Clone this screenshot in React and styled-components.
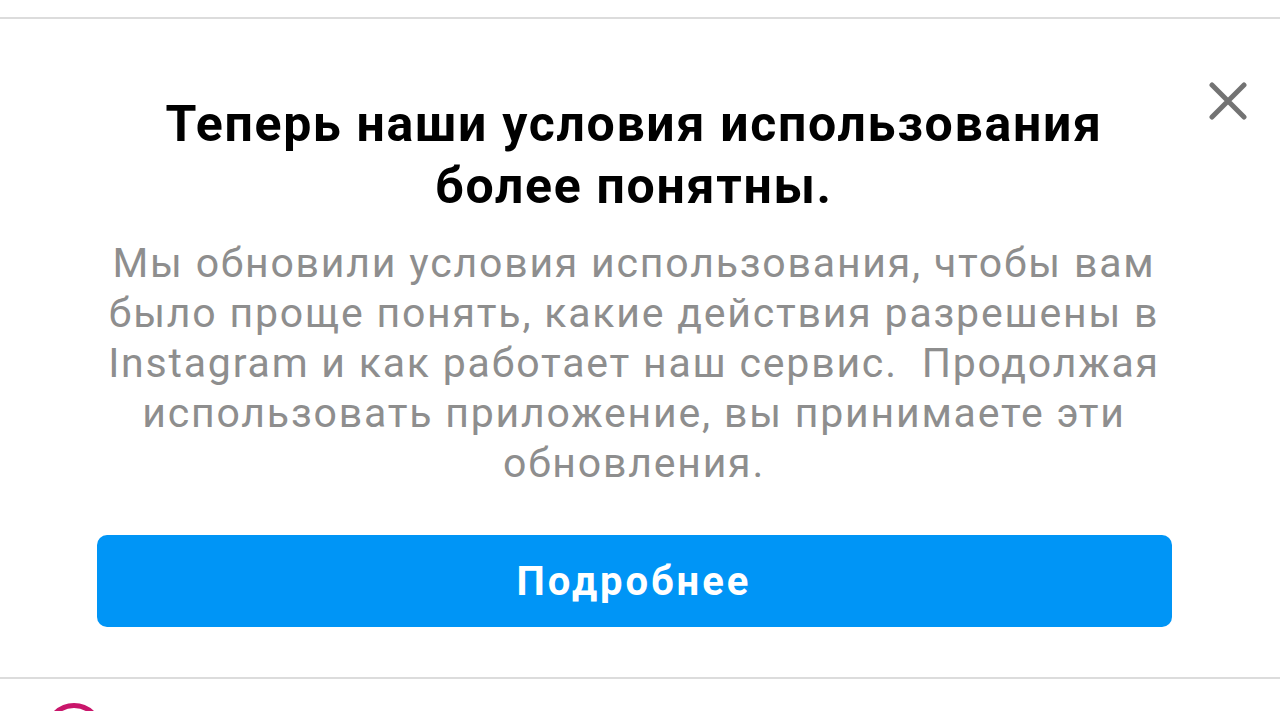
import React from "react";
import styled, { createGlobalStyle } from "styled-components";

const GlobalStyle = createGlobalStyle`
  html, body {
    margin: 0;
    padding: 0;
    background: #ffffff;
  }
  body {
    font-family: Roboto, "Noto Sans", sans-serif;
    overflow: hidden;
  }
`;

const Screen = styled.div`
  width: 1280px;
  height: 711px;
  display: flex;
  flex-direction: column;
  background: #ffffff;
  overflow: hidden;
`;

const TopSpace = styled.div`
  height: 17px;
  flex: none;
`;

const Divider = styled.div`
  height: 2px;
  background: #dcdcdc;
  flex: none;
`;

const Sheet = styled.div`
  position: relative;
  flex: none;
  height: 658px;
  display: flex;
  flex-direction: column;
  align-items: center;
  padding: 74px 12px 0 0;
  box-sizing: border-box;
`;

const CloseButton = styled.button`
  position: absolute;
  top: 62px;
  right: 32px;
  width: 40px;
  height: 40px;
  padding: 0;
  border: none;
  background: none;
  display: flex;
  align-items: center;
  justify-content: center;
`;

const Title = styled.h1`
  margin: 0;
  width: 1040px;
  text-align: center;
  font-size: 50px;
  line-height: 62px;
  letter-spacing: 1.7px;
  font-weight: 700;
  color: #000000;
`;

const Body = styled.p`
  margin: 21px 0 0;
  width: 1080px;
  text-align: center;
  font-size: 41px;
  line-height: 50px;
  letter-spacing: 1.8px;
  font-weight: 400;
  color: #8e8e8e;
`;

const PrimaryButton = styled.button`
  margin-top: 47px;
  width: 1075px;
  height: 92px;
  flex: none;
  border: none;
  border-radius: 10px;
  background: #0095f6;
  color: #ffffff;
  font-family: Roboto, "Noto Sans", sans-serif;
  font-size: 40px;
  letter-spacing: 3px;
  font-weight: 700;
`;

const Footer = styled.div`
  flex: 1;
  padding: 24px 0 0 45px;
  overflow: hidden;
`;

const Avatar = styled.div`
  width: 58px;
  height: 58px;
  border-radius: 50%;
  border: 5px solid #c9166b;
  box-sizing: border-box;
`;

const App = () => (
  <Screen>
    <GlobalStyle />
    <TopSpace />
    <Divider />
    <Sheet>
      <CloseButton aria-label="Закрыть">
        <svg width="38" height="38" viewBox="0 0 38 38">
          <path
            d="M3 3 L35 35 M35 3 L3 35"
            stroke="#737373"
            strokeWidth="5"
            strokeLinecap="round"
          />
        </svg>
      </CloseButton>
      <Title>Теперь наши условия использования более понятны.</Title>
      <Body>
        Мы обновили условия использования, чтобы вам было проще понять, какие
        действия разрешены в Instagram и как работает наш сервис.&nbsp; Продолжая
        использовать приложение, вы принимаете эти обновления.
      </Body>
      <PrimaryButton>Подробнее</PrimaryButton>
    </Sheet>
    <Divider />
    <Footer>
      <Avatar />
    </Footer>
  </Screen>
);

export default App;
